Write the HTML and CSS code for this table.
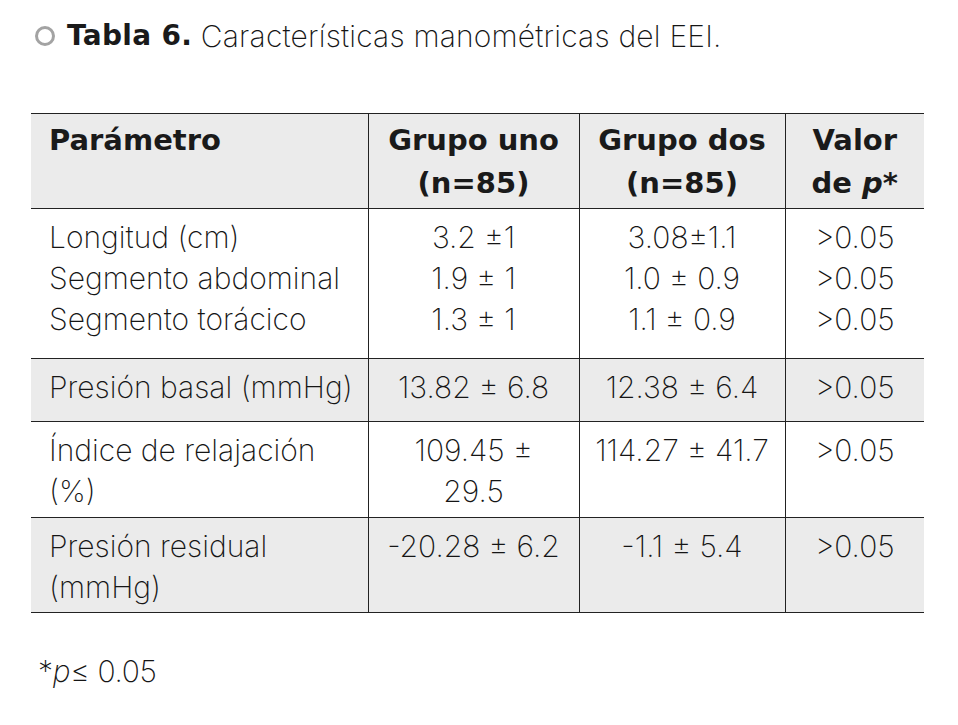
FILE: index.html
```html
<!DOCTYPE html>
<html lang="es">
<head>
<meta charset="utf-8">
<title>Tabla 6</title>
<link rel="stylesheet" href="styles.css">
</head>
<body>
<div class="page">
  <h1 class="title"><span class="bullet"></span><b class="title-strong">Tabla 6.</b> Características manométricas del EEI.</h1>
  <table class="data">
    <thead>
      <tr class="r-head">
        <th class="c1">Parámetro</th>
        <th class="c2">Grupo uno<br>(n=85)</th>
        <th class="c3">Grupo dos<br>(n=85)</th>
        <th class="c4">Valor<br>de <i>p</i>*</th>
      </tr>
    </thead>
    <tbody>
      <tr class="r1">
        <td class="c1">Longitud (cm)<br>Segmento abdominal<br>Segmento torácico</td>
        <td>3.2 ±1<br>1.9 ± 1<br>1.3 ± 1</td>
        <td>3.08±1.1<br>1.0 ± 0.9<br>1.1 ± 0.9</td>
        <td>&gt;0.05<br>&gt;0.05<br>&gt;0.05</td>
      </tr>
      <tr class="r2 shade">
        <td class="c1">Presión basal (mmHg)</td>
        <td>13.82 ± 6.8</td>
        <td>12.38 ± 6.4</td>
        <td>&gt;0.05</td>
      </tr>
      <tr class="r3">
        <td class="c1">Índice de relajación<br>(%)</td>
        <td>109.45 ±<br>29.5</td>
        <td>114.27 ± 41.7</td>
        <td>&gt;0.05</td>
      </tr>
      <tr class="r4 shade">
        <td class="c1">Presión residual<br>(mmHg)</td>
        <td>-20.28 ± 6.2</td>
        <td>-1.1 ± 5.4</td>
        <td>&gt;0.05</td>
      </tr>
    </tbody>
  </table>
  <p class="note">*<i>p</i>≤ 0.05</p>
</div>
</body>
</html>
```

FILE: styles.css
```css
html, body {
  margin: 0;
  padding: 0;
  background: #ffffff;
}

.page {
  padding: 18px 0 0 31px;
  color: #151515;
  font-family: "Inter", "Liberation Sans", sans-serif;
  font-weight: 200;
}

.title {
  margin: 0;
  font-size: 30px;
  line-height: 36px;
  font-weight: 200;
  letter-spacing: 0.2px;
  display: flex;
  align-items: center;
  white-space: pre;
}

.bullet {
  display: inline-block;
  box-sizing: border-box;
  width: 20px;
  height: 20px;
  margin: 0 12px 0 4px;
  border: 3px solid #a3a3a3;
  border-radius: 50%;
}

.title-strong {
  font-family: "DejaVu Sans", sans-serif;
  font-size: 28px;
  font-weight: 700;
  letter-spacing: 0.3px;
  color: #1a1a1a;
}

.data {
  margin-top: 59px;
  width: 893px;
  border-collapse: collapse;
  table-layout: fixed;
  font-size: 30px;
  letter-spacing: 0;
}

.data th,
.data td {
  box-sizing: border-box;
  padding: 8px 6px 0 6px;
  vertical-align: top;
  text-align: center;
  border-top: 1px solid #222;
  border-bottom: 1px solid #222;
  border-left: 1px solid #222;
  line-height: 41px;
  font-weight: 200;
}

.data th {
  font-family: "DejaVu Sans", sans-serif;
  font-size: 29px;
  font-weight: 700;
  color: #1a1a1a;
  padding-top: 5px;
  line-height: 43px;
}

.data .c1 {
  width: 337px;
  padding-left: 18px;
  text-align: left;
  border-left: none;
}

.data .c2 { width: 211px; }
.data .c3 { width: 206px; }
.data .c4 { width: 139px; }

.r-head { height: 95px; background: #ebebeb; }
.r1 { height: 150px; }
.r2 { height: 63px; }
.r3 { height: 96px; }
.r4 { height: 95px; }

.shade { background: #ebebeb; }

.data i {
  font-style: italic;
}

.note {
  margin: 38px 0 0 7px;
  font-size: 30px;
  line-height: 40px;
  font-weight: 200;
  letter-spacing: -0.3px;
}
```
